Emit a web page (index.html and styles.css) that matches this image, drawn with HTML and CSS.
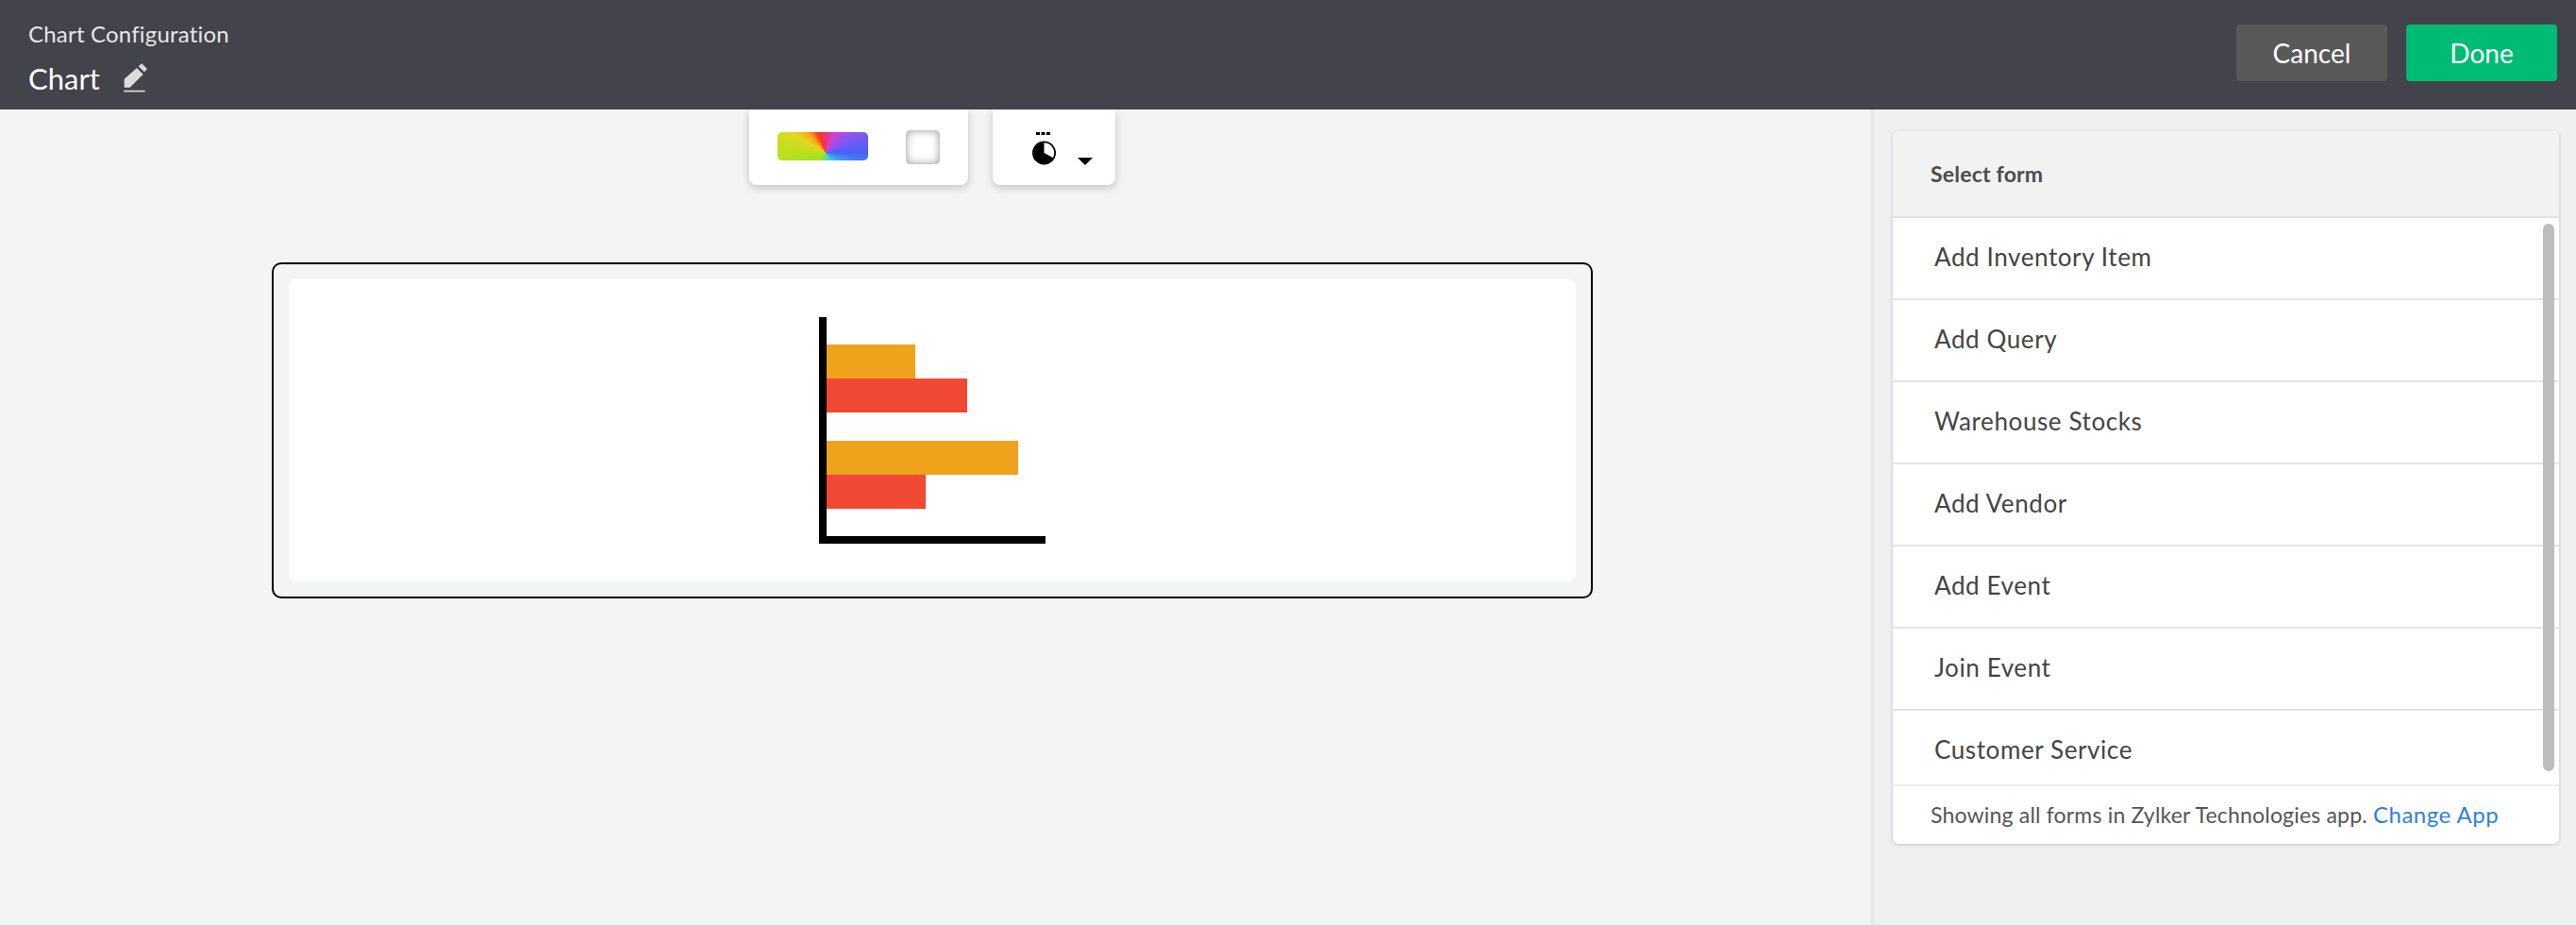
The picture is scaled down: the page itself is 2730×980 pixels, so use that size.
FILE: index.html
```html
<!DOCTYPE html>
<html lang="en">
<head>
  <meta charset="UTF-8">
  <title>Chart Configuration</title>
  <link rel="stylesheet" href="styles.css">
</head>
<body>
  <!-- Top bar -->
  <header class="topbar">
    <div class="topbar-title">
      <div class="topbar-label">Chart Configuration</div>
      <div class="topbar-name">
        <span>Chart</span>
        <svg class="edit-icon" viewBox="0 0 25 31" width="25" height="31">
          <path d="M0.7 16.7 L14 5 L20.7 11.7 L6.7 25.7 L0.7 25.7 Z" fill="#dcdcdc"/>
          <path d="M15.7 3.3 L19.3 0.3 L25 6 L22 9.3 Z" fill="#dcdcdc"/>
          <rect x="0.3" y="28.7" width="22.4" height="1.7" fill="#dcdcdc"/>
        </svg>
      </div>
    </div>
    <div class="topbar-actions">
      <button class="btn btn-cancel">Cancel</button>
      <button class="btn btn-done">Done</button>
    </div>
  </header>

  <div class="workspace">
    <!-- Chart preview -->
    <main class="stage">
      <div class="toolbars">
        <div class="toolbar toolbar-colors">
          <div class="swatch-gradient"></div>
          <div class="swatch-blank"></div>
        </div>
        <div class="toolbar toolbar-theme">
          <svg class="theme-icon" viewBox="0 0 28 38" width="28" height="38">
            <rect x="4" y="0" width="4" height="3" fill="#000"/>
            <rect x="9.5" y="0" width="4" height="3" fill="#000"/>
            <rect x="15" y="0" width="4" height="3" fill="#000"/>
            <circle cx="12.5" cy="22" r="11.6" fill="#fff" stroke="#000" stroke-width="1.8"/>
            <path d="M12.5 22 L12.5 11 A11 11 0 1 0 22.2 27.2 Z" fill="#000"/>
          </svg>
          <span class="caret"></span>
        </div>
      </div>
      <div class="chart-frame">
        <div class="chart-card">
          <svg class="chart-placeholder" viewBox="0 0 240 240" width="240" height="240">
            <rect x="8" y="29" width="94" height="36" fill="#efa21c"/>
            <rect x="8" y="65" width="149" height="36" fill="#f24934"/>
            <rect x="8" y="131" width="203" height="36" fill="#efa21c"/>
            <rect x="8" y="167" width="105" height="36" fill="#f24934"/>
            <rect x="0" y="0" width="8" height="240" fill="#000"/>
            <rect x="0" y="232" width="240" height="8" fill="#000"/>
          </svg>
        </div>
      </div>
    </main>

    <!-- Form list -->
    <aside class="side">
      <div class="form-panel">
        <div class="form-panel-head">Select form</div>
        <div class="form-list-wrap">
          <ul class="form-list">
            <li>Add Inventory Item</li>
            <li>Add Query</li>
            <li>Warehouse Stocks</li>
            <li>Add Vendor</li>
            <li>Add Event</li>
            <li>Join Event</li>
            <li>Customer Service</li>
          </ul>
          <div class="scroll-thumb"></div>
        </div>
        <div class="form-panel-foot">Showing all forms in Zylker Technologies app. <a href="#">Change App</a></div>
      </div>
    </aside>
  </div>
</body>
</html>
```

FILE: styles.css
```css
* {
  box-sizing: border-box;
}
html, body {
  height: 100%;
}
body {
  margin: 0;
  display: flex;
  flex-direction: column;
  background-color: #f3f4f6;
  color: #444;
  font-family: Lato, "Open Sans", sans-serif;
  overflow: hidden;
}
/* --- Top bar --- */
.topbar {
  flex: 0 0 116px;
  display: flex;
  justify-content: space-between;
  align-items: center;
  padding: 0 20px 4px 30px;
  background-color: #42434b;
  position: relative;
  z-index: 2;
}
.topbar-title {
  align-self: flex-start;
  padding-top: 21px;
}
.topbar-label {
  font-size: 24px;
  line-height: 30px;
  letter-spacing: 0.2px;
  color: #e6e6e6;
}
.topbar-name {
  display: flex;
  align-items: flex-start;
  gap: 25px;
  margin-top: 14px;
  font-size: 31px;
  line-height: 36px;
  color: #fff;
}
.edit-icon {
  margin-top: 2px;
}
.topbar-actions {
  display: flex;
  gap: 20px;
}
.btn {
  width: 160px;
  height: 60px;
  border: none;
  border-radius: 4px;
  color: #fff;
  font-family: inherit;
  font-size: 28px;
  cursor: pointer;
}
.btn-cancel {
  background-color: #595959;
}
.btn-done {
  background-color: #00bb73;
}
/* --- Layout --- */
.workspace {
  flex: 1;
  display: flex;
  min-height: 0;
}
.stage {
  flex: 1;
  padding-left: 288px;
}
.toolbars {
  width: 1400px;
  display: flex;
  justify-content: center;
  gap: 26px;
}
.toolbar {
  height: 80px;
  display: flex;
  background-color: #fff;
  border-radius: 0 0 8px 8px;
  box-shadow: 0 3px 8px rgba(0,0,0,0.2);
}
.toolbar-colors {
  width: 232px;
  padding: 22px 30px 0;
  gap: 40px;
}
.swatch-gradient {
  width: 96px;
  height: 30px;
  margin-top: 2px;
  border-radius: 5px;
  background: conic-gradient(at 53% 72%, #ee2f6a 0deg, #d23fd0 25deg, #8a55f2 57deg, #4a62f4 90deg, #35aaf0 122deg, #58d8b0 160deg, #98e030 215deg, #b4e01f 265deg, #e4d81c 300deg, #f3a81a 318deg, #f73a22 338deg, #ee2f6a 360deg);
}
.swatch-blank {
  width: 36px;
  height: 36px;
  border-radius: 5px;
  background-color: #fff;
  box-shadow: inset 0 0 0 1px #c8c8c8, inset 0 0 10px rgba(0,0,0,0.42);
}
.toolbar-theme {
  width: 130px;
  padding: 24px 0 0 42px;
}
.caret {
  width: 0;
  height: 0;
  margin: 27px 0 0 20px;
  border-left: 8px solid transparent;
  border-right: 8px solid transparent;
  border-top: 8px solid #000;
}
/* --- Chart preview --- */
.chart-frame {
  width: 1400px;
  height: 356px;
  margin-top: 82px;
  padding: 16px;
  border: 2px solid #000;
  border-radius: 10px;
}
.chart-card {
  height: 100%;
  display: flex;
  justify-content: center;
  align-items: center;
  background-color: #fff;
  border-radius: 8px;
}
/* --- Form list --- */
.side {
  flex: 0 0 748px;
  padding: 23px 18px 0 20px;
  background-color: #eff0f2;
  border-left: 4px solid #e6e8eb;
}
.form-panel {
  height: 755px;
  display: flex;
  flex-direction: column;
  background-color: #fff;
  border-radius: 6px;
  box-shadow: 0 1px 4px rgba(0,0,0,0.18);
  overflow: hidden;
}
.form-panel-head {
  flex: 0 0 90px;
  padding: 0 40px;
  line-height: 90px;
  font-size: 23px;
  font-weight: 700;
  letter-spacing: 0.2px;
  color: #4c4c4c;
  background-color: #f2f2f3;
  border-bottom: 2px solid #e2e5e8;
}
.form-list-wrap {
  position: relative;
  flex: 0 0 602px;
  overflow: hidden;
  border-bottom: 2px solid #eeeeee;
}
.form-list {
  margin: 0;
  padding: 0;
  list-style: none;
}
.form-list li {
  height: 87px;
  padding-left: 44px;
  line-height: 82px;
  font-size: 26px;
  letter-spacing: 0.6px;
  border-bottom: 2px solid #e2e5e8;
}
.scroll-thumb {
  position: absolute;
  top: 6px;
  right: 5px;
  width: 12px;
  height: 580px;
  border-radius: 6px;
  background-color: #bdbdbd;
}
.form-panel-foot {
  flex: 1;
  padding-left: 40px;
  line-height: 60px;
  font-size: 23px;
  letter-spacing: 0.19px;
  color: #555;
}
.form-panel-foot a {
  font-size: 24px;
  letter-spacing: 0.5px;
  color: #2f7fe0;
  text-decoration: none;
}
```
